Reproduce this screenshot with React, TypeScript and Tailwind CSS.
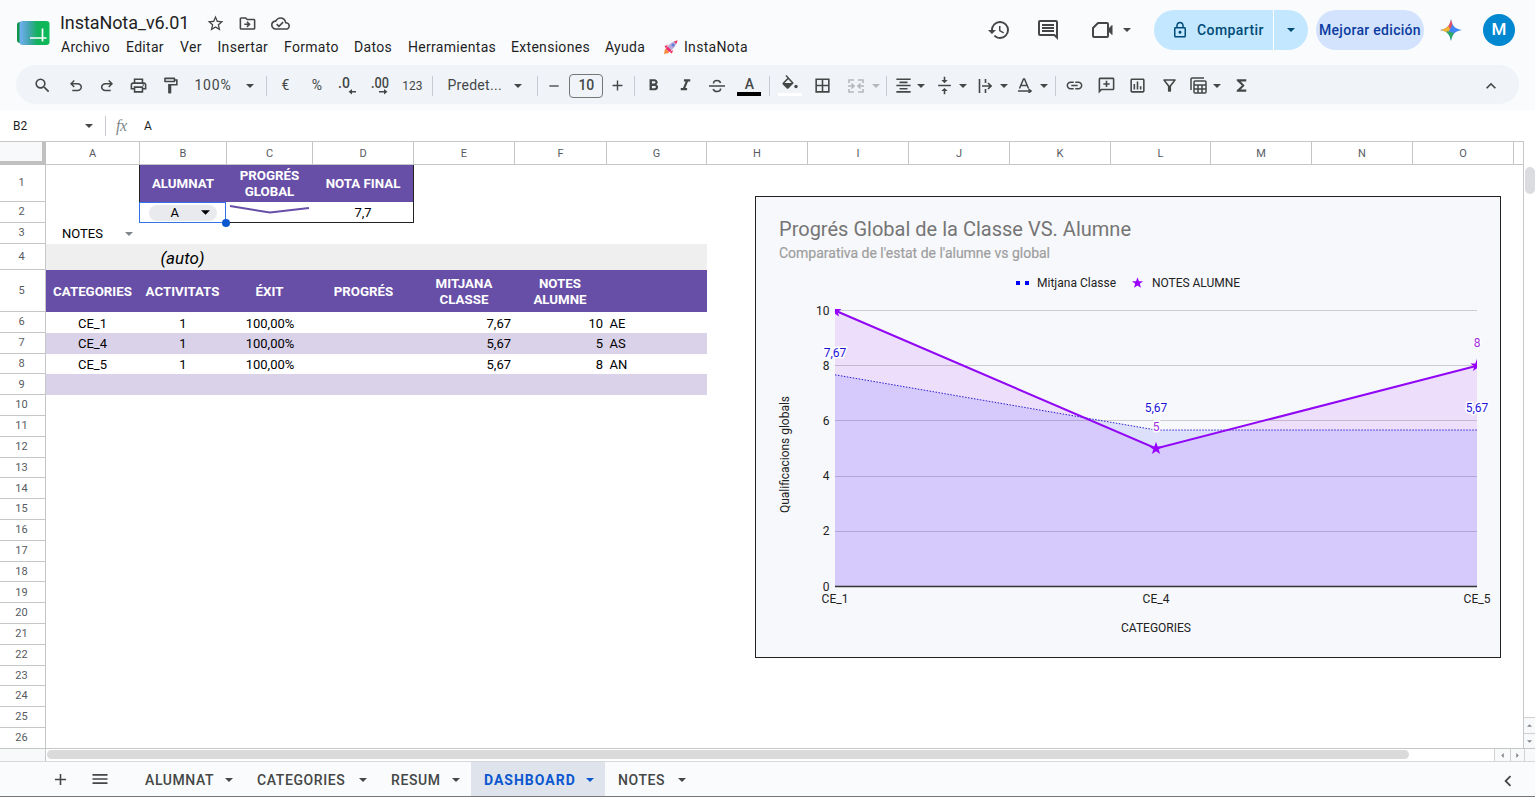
import React from 'react';
import clsx from 'clsx';
import {
  MdAdd,
  MdBorderAll,
  MdChevronLeft,
  MdFormatAlignCenter,
  MdFormatBold,
  MdFormatItalic,
  MdFunctions,
  MdHistory,
  MdKeyboardArrowUp,
  MdLink,
  MdMenu,
  MdOutlineCloudDone,
  MdOutlineDriveFileMove,
  MdOutlineFilterAlt,
  MdOutlineFormatPaint,
  MdOutlineInsertChart,
  MdOutlineLock,
  MdOutlinePrint,
  MdOutlineStarBorder,
  MdRemove,
  MdSearch,
  MdVerticalAlignCenter,
} from 'react-icons/md';

interface ToolProps {
  className?: string;
  children: React.ReactNode;
}

const menus = [
  { label: 'Archivo', width: 'w-[65px]' },
  { label: 'Editar', width: 'w-[54px]' },
  { label: 'Ver', width: 'w-[37.5px]' },
  { label: 'Insertar', width: 'w-[66.5px]' },
  { label: 'Formato', width: 'w-[70px]' },
  { label: 'Datos', width: 'w-[54px]' },
  { label: 'Herramientas', width: 'w-[103px]' },
  { label: 'Extensiones', width: 'w-[94px]' },
  { label: 'Ayuda', width: 'w-[58px]' },
];

const columns = [
  { label: 'A', width: 'w-[94px]' },
  { label: 'B', width: 'w-[87px]' },
  { label: 'C', width: 'w-[86px]' },
  { label: 'D', width: 'w-[101px]' },
  { label: 'E', width: 'w-[101px]' },
  { label: 'F', width: 'w-[92px]' },
  { label: 'G', width: 'w-[100px]' },
  { label: 'H', width: 'w-[101px]' },
  { label: 'I', width: 'w-[101px]' },
  { label: 'J', width: 'w-[101px]' },
  { label: 'K', width: 'w-[101px]' },
  { label: 'L', width: 'w-[100px]' },
  { label: 'M', width: 'w-[101px]' },
  { label: 'N', width: 'w-[101px]' },
  { label: 'O', width: 'w-[101px]' },
];

const rowHeights: Record<number, string> = {
  1: 'h-[37px]',
  2: 'h-[21px]',
  3: 'h-[21px]',
  4: 'h-[26px]',
  5: 'h-[42px]',
};

const records = [
  { category: 'CE_1', count: '1', exit: '100,00%', average: '7,67', grade: '10', mark: 'AE' },
  { category: 'CE_4', count: '1', exit: '100,00%', average: '5,67', grade: '5', mark: 'AS' },
  { category: 'CE_5', count: '1', exit: '100,00%', average: '5,67', grade: '8', mark: 'AN' },
  { category: '', count: '', exit: '', average: '', grade: '', mark: '' },
];

const sheets = [
  { label: 'ALUMNAT', width: 'w-[112px]' },
  { label: 'CATEGORIES', width: 'w-[134px]' },
  { label: 'RESUM', width: 'w-[93px]' },
  { label: 'DASHBOARD', width: 'w-[134px]', active: true },
  { label: 'NOTES', width: 'w-[92px]' },
];

const STAR = '0,-6.8 1.7,-2.1 6.6,-2.1 2.7,0.9 4.1,5.6 0,2.8 -4.1,5.6 -2.7,0.9 -6.6,-2.1 -1.7,-2.1';

function Caret({ className }: { className?: string }) {
  return (
    <svg viewBox="0 0 8 4" className={clsx('h-1 w-2 shrink-0 fill-current', className)}>
      <path d="M0 0h8L4 4z" />
    </svg>
  );
}

function Tool({ className, children }: ToolProps) {
  return <div className={clsx('flex h-full shrink-0 items-center justify-center', className)}>{children}</div>;
}

function Divider() {
  return <div className="h-5 w-px shrink-0 bg-[#c7cad0]" />;
}

function Symbol({ d, className }: { d: string; className?: string }) {
  return (
    <svg viewBox="0 -960 960 960" className={clsx('fill-current', className)}>
      <path d={d} />
    </svg>
  );
}

function Logo() {
  return (
    <svg viewBox="0 0 34 26" className="h-[26px] w-[34px]">
      <defs>
        <linearGradient id="logo" x1="0" x2="1">
          <stop offset="0" stopColor="#72b1f5" />
          <stop offset=".3" stopColor="#47a5b4" />
          <stop offset=".6" stopColor="#12b25c" />
          <stop offset="1" stopColor="#0cbb57" />
        </linearGradient>
      </defs>
      <rect x="1" y="2" width="12" height="21" rx="3" fill="#109447" />
      <rect x="3.5" y="1" width="30" height="24" rx="3" fill="url(#logo)" />
      <path d="M14 18h16.500M26.500 8.500v13" stroke="#fff" strokeWidth="1.700" fill="none" />
    </svg>
  );
}

function Rocket() {
  return (
    <svg viewBox="0 0 16 16" className="h-4 w-4">
      <path d="M5 6 1.500 7 3 9.500zM10 11l-1 3.500L6.500 13z" fill="#f0325f" />
      <path d="M2 10 5 9l2 2-1.500 3L1 15z" fill="#ff8a3c" />
      <path d="M3.500 10.500C5 6 8.500 2.500 13.500 2c0 5-3.500 8.500-8 10.500z" fill="#b9a9d8" />
      <path d="M3 9.500 4.500 7.500l4 4L6.500 13z" fill="#f3246a" />
      <path d="M11 2.500 14.500 1.200 13.500 5z" fill="#f0325f" />
      <circle cx="10" cy="6" r="1.500" fill="#5b7fd6" />
    </svg>
  );
}

function TitleBar() {
  return (
    <header className="flex h-[65px] pl-4">
      <div className="mt-5 w-11 shrink-0">
        <Logo />
      </div>
      <div className="flex flex-col">
        <div className="mt-[11px] flex h-6 items-center">
          <h1 className="w-[145.500px] pb-px text-[18px] tracking-[-0.080px] text-[#1f1f1f]">InstaNota_v6.01</h1>
          <MdOutlineStarBorder className="h-[19px] w-[19px] text-[#444746]" />
          <MdOutlineDriveFileMove className="ml-[13px] h-[19px] w-[19px] text-[#444746]" />
          <MdOutlineCloudDone className="ml-[14px] h-[19px] w-[19px] text-[#444746]" />
        </div>
        <nav className="mt-0.5 ml-px flex h-5 items-center text-[14px] tracking-[0.3px] text-[#1f1f1f]">
          {menus.map((menu) => (
            <span key={menu.label} className={menu.width}>
              {menu.label}
            </span>
          ))}
          <span className="flex items-center gap-[5px]">
            <Rocket />
            InstaNota
          </span>
        </nav>
      </div>

      <div className="ml-auto flex h-[60px] items-center text-[#444746]">
        <MdHistory className="h-6 w-6" />
        <svg viewBox="0 0 24 24" className="ml-[25px] h-6 w-6 fill-current">
          <path d="M22 4c0-1.100-.9-2-2-2H4c-1.100 0-2 .9-2 2v12c0 1.100.9 2 2 2h14l4 4V4zM20 17.200 18.800 16H4V4h16zM6 12h12v2H6zM6 9h12v2H6zM6 6h12v2H6z" />
        </svg>
        <svg viewBox="0 0 24 24" className="ml-[31px] h-6 w-6 fill-none stroke-current stroke-2">
          <path d="M7 5h9c.6 0 1 .4 1 1v12c0 .6-.4 1-1 1H3c-.6 0-1-.4-1-1v-8z" strokeLinejoin="round" />
          <path d="m17.500 11 3.500-3.500v9L17.500 13z" fill="currentColor" strokeWidth="1" />
        </svg>
        <Caret className="ml-2" />
        <button className="ml-[23px] flex h-10 items-center rounded-full bg-[#c2e7ff] text-[14px] font-medium tracking-[0.4px] text-[#004a77]">
          <span className="flex h-full w-[120px] items-center border-r border-white pl-[17px]">
            <MdOutlineLock className="mr-2 h-[18px] w-[18px]" />
            Compartir
          </span>
          <span className="flex w-[34px] justify-center">
            <Caret />
          </span>
        </button>
        <button className="ml-2 h-10 w-[108px] rounded-full bg-[#d3e3fd] text-[14px] font-medium tracking-[0.3px] whitespace-nowrap text-[#0b3ba0]">
          Mejorar edición
        </button>
        <svg viewBox="0 0 22 22" className="ml-4 h-[22px] w-[22px]">
          <defs>
            <clipPath id="spark">
              <path d="M11 0c.8 6.500 4.500 10.200 11 11-6.500.8-10.200 4.500-11 11-.8-6.500-4.500-10.200-11-11 6.500-.8 10.200-4.500 11-11z" />
            </clipPath>
          </defs>
          <g clipPath="url(#spark)">
            <path d="M0 0h22v22H0z" fill="#4285f4" />
            <path d="M0 0h14l-3 9-5 3z" fill="#e8505b" />
            <path d="M0 5h7l3 5-2 4H0z" fill="#f2b632" />
            <path d="m7 12 7 2-1 8H6z" fill="#2fa866" />
          </g>
        </svg>
        <div className="mr-5 ml-[21px] flex h-8 w-8 items-center justify-center rounded-full bg-[#0288d1] text-[17px] font-medium text-white">
          M
        </div>
      </div>
    </header>
  );
}

function Toolbar() {
  return (
    <div className="mx-4 flex h-[39px] items-center rounded-full bg-[#f0f4f9] pt-0.5 text-[14px] text-[#444746]">
      <Tool className="w-11 pl-2">
        <MdSearch className="h-[19px] w-[19px]" />
      </Tool>
      <Tool className="w-[31.6px]">
        <Symbol
          className="h-[18px] w-[18px]"
          d="M280-200v-80h284q63 0 109.500-40T720-420q0-60-46.500-100T564-560H312l104 104-56 56-200-200 200-200 56 56-104 104h252q97 0 169.500 63T800-420q0 94-72.500 157T564-200H280Z"
        />
      </Tool>
      <Tool className="w-[31.6px]">
        <Symbol
          className="h-[18px] w-[18px]"
          d="M396-200q-97 0-169.500-63T154-420q0-94 72.500-157T396-640h252L544-744l56-56 200 200-200 200-56-56 104-104H396q-63 0-109.500 40T240-420q0 60 46.500 100T396-280h284v80H396Z"
        />
      </Tool>
      <Tool className="w-[31.6px]">
        <MdOutlinePrint className="h-[19px] w-[19px]" />
      </Tool>
      <Tool className="w-[31.6px]">
        <MdOutlineFormatPaint className="h-[19px] w-[19px]" />
      </Tool>
      <div className="flex w-20 items-center justify-between pr-3 pl-2 tracking-[0.800px]">
        100%
        <Caret />
      </div>
      <Divider />
      <Tool className="ml-0.5 w-8">€</Tool>
      <Tool className="w-[31px]">%</Tool>
      <Tool className="w-8">
        <svg viewBox="0 0 20 20" className="h-5 w-5 fill-current">
          <text x="0" y="12" fontSize="14" fontWeight="500">.0</text>
          <path d="M18 15v1.500h-4v2l-3.500-2.700L14 13v2z" />
        </svg>
      </Tool>
      <Tool className="w-8">
        <svg viewBox="0 0 20 20" className="h-5 w-5 fill-current">
          <text x="1" y="12" fontSize="14" fontWeight="500" textLength="18" lengthAdjust="spacingAndGlyphs">.00</text>
          <path d="M9 15v1.500h5v2l3.500-2.700L14 13v2z" />
        </svg>
      </Tool>
      <Tool className="w-8 text-[12px]">123</Tool>
      <div className="w-1" />
      <Divider />
      <div className="flex w-[104px] items-center justify-between pr-[15px] pl-3.5 tracking-[0.3px]">
        Predet...
        <Caret />
      </div>
      <Divider />
      <Tool className="w-[31px]">
        <MdRemove className="h-4 w-4" />
      </Tool>
      <div className="flex h-6 w-[34px] shrink-0 items-center justify-center rounded-sm border border-[#747775] font-medium">
        10
      </div>
      <Tool className="w-[29px]">
        <MdAdd className="h-[17px] w-[17px]" />
      </Tool>
      <div className="w-0.5" />
      <Divider />
      <Tool className="ml-0.5 w-8">
        <MdFormatBold className="h-[19px] w-[19px]" />
      </Tool>
      <Tool className="w-8">
        <MdFormatItalic className="h-[19px] w-[19px]" />
      </Tool>
      <Tool className="w-8">
        <svg viewBox="0 0 16 14" className="h-3.5 w-4 fill-none stroke-current stroke-[1.600]">
          <path d="M0 7h16M4.500 4.500C4.500 2.500 6 1.500 8 1.500s3.200 1 3.500 2.500M4.200 10c.4 1.600 1.800 2.500 3.800 2.500s3.600-1 3.600-3" />
        </svg>
      </Tool>
      <Tool className="w-8">
        <div className="flex w-6 flex-col items-center border-b-4 border-black text-[14px] leading-4 font-medium">A</div>
      </Tool>
      <div className="w-1" />
      <Divider />
      <Tool className="ml-1 w-8">
        <svg viewBox="0 0 24 23" className="h-[23px] w-6 fill-current">
          <path d="M8.500 1 7.400 2.100l2 2L4.800 8.700c-.5.500-.5 1.200 0 1.700l4 4c.5.500 1.200.5 1.700 0l5.300-5.300zM10.300 5.300l3.400 3.700H6.600z" />
          <circle cx="18" cy="12.500" r="1.700" />
          <path d="M0 19h24v3H0z" fill="#fff" />
        </svg>
      </Tool>
      <Tool className="w-8">
        <MdBorderAll className="h-[19px] w-[19px]" />
      </Tool>
      <div className="flex w-12 items-center gap-3 pl-2.5 text-[#b4b7bb]">
        <svg viewBox="0 0 16 14" className="h-3.5 w-4 shrink-0 fill-none stroke-current stroke-[1.600]">
          <path d="M1 4V1h5M15 4V1h-5M1 10v3h5M15 10v3h-5M0 7h5M3.500 4.500 6 7 3.500 9.500M16 7h-5M12.500 4.500 10 7l2.500 2.500" />
        </svg>
        <Caret className="-ml-1" />
      </div>
      <Divider />
      <div className="flex w-[41px] items-center gap-[3px] pl-[7px]">
        <MdFormatAlignCenter className="h-[19px] w-[19px]" />
        <Caret className="ml-px" />
      </div>
      <div className="flex w-[41px] items-center gap-1 pl-[7px]">
        <MdVerticalAlignCenter className="h-[19px] w-[19px]" />
        <Caret className="ml-px" />
      </div>
      <div className="flex w-[40px] items-center gap-1.5 pl-[9px]">
        <svg viewBox="0 0 14 14" className="h-3.5 w-3.5 fill-none stroke-current stroke-[1.600]">
          <path d="M1.500 0v14M7.500 0v4M7.500 10v4M4 7h9M10 4l3 3-3 3" />
        </svg>
        <Caret className="ml-0.5" />
      </div>
      <div className="flex w-[46px] items-center gap-1.5 pl-[9px]">
        <svg viewBox="0 0 14 15" className="h-[15px] w-3.5 fill-none stroke-current stroke-[1.500]">
          <path d="M1.500 10.500 5.500 1h1l4 9.500M3 7.500h6M0 13h12M10.500 11l2.500 2-2.500 2" />
        </svg>
        <Caret className="ml-0.5" />
      </div>
      <Divider />
      <Tool className="ml-0.5 w-8">
        <MdLink className="h-[19px] w-[19px]" />
      </Tool>
      <Tool className="w-8">
        <svg viewBox="0 0 24 24" className="h-[19px] w-[19px] fill-current">
          <path d="M22 4c0-1.100-.9-2-2-2H4c-1.100 0-2 .9-2 2v18l4-4h14c1.100 0 2-.9 2-2V4zM20 16H5.200L4 17.200V4h16zM11 14h2v-3h3V9h-3V6h-2v3H8v2h3z" />
        </svg>
      </Tool>
      <Tool className="w-[31px]">
        <MdOutlineInsertChart className="h-[19px] w-[19px]" />
      </Tool>
      <Tool className="w-8">
        <MdOutlineFilterAlt className="h-[19px] w-[19px]" />
      </Tool>
      <div className="flex w-10 items-center gap-1.5 pl-[5px]">
        <svg viewBox="0 0 17 17" className="h-[17px] w-[17px] shrink-0 fill-none stroke-current stroke-[1.500]">
          <path d="M1 13V2.200C1 1.500 1.500 1 2.200 1H14" />
          <rect x="4" y="4" width="12" height="12" rx="1" />
          <path d="M4 8h12M4 12h12M8 8v8M12 8v8" />
        </svg>
        <Caret />
      </div>
      <Tool className="w-8">
        <MdFunctions className="h-[19px] w-[19px]" />
      </Tool>
      <Tool className="mr-[18px] ml-auto">
        <MdKeyboardArrowUp className="h-5 w-5" />
      </Tool>
    </div>
  );
}

function FormulaBar() {
  return (
    <div className="mt-1.5 flex h-[31px] items-center bg-white pt-px pl-[13px] text-[12px] text-[#1f1f1f]">
      <div className="flex w-[92px] items-center justify-between pr-3">
        B2
        <Caret className="text-[#444746]" />
      </div>
      <Divider />
      <span className="ml-2.5 w-7 font-['Liberation_Serif'] text-[16px] tracking-[-0.5px] text-[#80868b] italic">fx</span>
      A
    </div>
  );
}

function ProgressChart() {
  const x = [80, 401, 722];
  const y = (value: number) => 390.5 - value * 27.6;
  const average = [7.67, 5.67, 5.67].map((value, i) => `${x[i]},${y(value)}`).join(' ');
  const student = [10, 5, 8].map((value, i) => `${x[i]},${y(value)}`).join(' ');

  return (
    <svg
      viewBox="1 1 744 460"
      className="absolute top-[31px] left-[709px] h-[462px] w-[746px] border border-[#222] bg-[#f7f8fb] text-[12px]"
    >
      <text x="24" y="40" fontSize="20" fill="#757575" textLength="352">Progrés Global de la Classe VS. Alumne</text>
      <text x="24" y="62" fontSize="14" fill="#9e9e9e" stroke="#9e9e9e" strokeWidth=".2" textLength="271">
        Comparativa de l'estat de l'alumne vs global
      </text>
      <path d="M261 85h4v4h-4zM270 85h4v4h-4z" fill="#0000ff" />
      <text x="282" y="91" fontSize="12" fill="#222" textLength="79">Mitjana Classe</text>
      <polygon points={STAR} transform="translate(382.500 87) scale(.85)" fill="#9900ff" />
      <text x="397" y="91" fontSize="12" fill="#222" textLength="88">NOTES ALUMNE</text>

      {[2, 4, 6, 8, 10].map((tick) => (
        <path key={tick} d={`M80 ${Math.floor(y(tick)) + 0.5}H722`} stroke="#cccccc" />
      ))}
      <polygon points={`80,390.500 ${average} 722,390.500`} fill="#0011ff" fillOpacity=".1" />
      <polygon points={`80,390.500 ${student} 722,390.500`} fill="#9900ff" fillOpacity=".1" />
      <path d="M80 390.500H722" stroke="#333" strokeWidth="1.500" />
      <polyline points={average} fill="none" stroke="#2a1fd0" strokeWidth="1" strokeDasharray="1.500 1.500" />
      <polyline points={student} fill="none" stroke="#9107f5" strokeWidth="2" />
      <clipPath id="plot">
        <path d="M80 113h642v278H80z" />
      </clipPath>
      <g clipPath="url(#plot)" fill="#9900ff">
        <polygon points={STAR} transform="translate(80 115)" />
        <polygon points={STAR} transform="translate(401 252.500)" />
        <polygon points={STAR} transform="translate(722 169.500)" />
      </g>

      {[0, 2, 4, 6, 8, 10].map((tick) => (
        <text key={tick} x="74.5" y={y(tick) + 4} fontSize="12" textAnchor="end" fill="#222">
          {tick}
        </text>
      ))}
      <g fontSize="12" textAnchor="middle" stroke="#fff" strokeWidth="3" paintOrder="stroke">
        <g fill="#1a12d8">
          <text x="80" y="161">7,67</text>
          <text x="401" y="216">5,67</text>
          <text x="722" y="216">5,67</text>
        </g>
        <g fill="#a02de0">
          <text x="401" y="235">5</text>
          <text x="722" y="151">8</text>
        </g>
      </g>
      <g fontSize="12" textAnchor="middle" fill="#222">
        <text x="80" y="406.500">CE_1</text>
        <text x="401" y="406.500">CE_4</text>
        <text x="722" y="406.500">CE_5</text>
        <text x="401" y="436">CATEGORIES</text>
        <text transform="translate(34 258.500) rotate(-90)" textLength="117">Qualificacions globals</text>
      </g>
    </svg>
  );
}

function Cells() {
  return (
    <div className="relative h-full flex-1 text-[13px] text-black">
      <div className="flex h-[37px] pl-[93px] text-center text-[13.300px] leading-4 font-bold text-white">
        <div className="flex w-[275px] items-center border-x border-[#222] bg-[#674ea7]">
          <span className="w-[86px]">ALUMNAT</span>
          <span className="w-[87px] px-2">PROGRÉS GLOBAL</span>
          <span className="w-[100px]">NOTA FINAL</span>
        </div>
      </div>
      <div className="flex h-[21px] pl-[93px]">
        <div className="relative flex w-[87px] items-center justify-center border-[1.500px] border-[#3271ea]">
          <div className="flex h-4 w-[68px] items-center justify-between rounded-full bg-[#e8eaed] pr-[7px] pl-[22px]">
            A
            <Caret className="h-[5px]! w-[9px]!" />
          </div>
          <div className="absolute -right-[5px] -bottom-[5px] z-10 h-2 w-2 rounded-full bg-[#0b57d0]" />
        </div>
        <div className="w-[87px] border-b border-[#222]">
          <svg viewBox="0 0 87 20" className="h-5 w-[87px]">
            <path d="M4 4 44 10.500 83 6" fill="none" stroke="#674ea7" strokeWidth="2" />
          </svg>
        </div>
        <div className="w-[101px] border-r border-b border-[#222] text-center leading-[22px]">7,7</div>
      </div>
      <div className="flex h-[21px] w-[94px] items-center justify-between pr-[7px] pl-4">
        NOTES
        <Caret className="text-[#80868b]" />
      </div>
      <div className="flex h-[26px] w-[661px] items-center bg-[#efefef] pt-1 pl-[93px]">
        <span className="w-[87px] text-center text-[17px] italic">(auto)</span>
      </div>
      <div className="flex h-[42px] w-[661px] items-center bg-[#674ea7] pt-0.5 text-center text-[13.300px] leading-4 font-bold text-white">
        <span className="w-[93px]">CATEGORIES</span>
        <span className="w-[87px]">ACTIVITATS</span>
        <span className="w-[87px]">ÉXIT</span>
        <span className="w-[101px]">PROGRÉS</span>
        <span className="w-[100px] px-4">MITJANA CLASSE</span>
        <span className="w-[92px] px-4">NOTES ALUMNE</span>
      </div>
      {records.map((record, i) => (
        <div
          key={i}
          className={clsx('flex h-[20.800px] w-[661px] items-center pt-0.5', i % 2 === 1 ? 'bg-[#d9d2e9]' : 'bg-white')}
        >
          <span className="w-[93px] text-center">{record.category}</span>
          <span className="w-[88px] text-center">{record.count}</span>
          <span className="w-[86px] text-center">{record.exit}</span>
          <span className="w-[101px]" />
          <span className="w-[97px] text-right">{record.average}</span>
          <span className="w-[92px] text-right">{record.grade}</span>
          <span className="pl-[6.500px]">{record.mark}</span>
        </div>
      ))}
      <ProgressChart />
    </div>
  );
}

function Grid() {
  return (
    <div className="flex h-[608px] shrink-0 overflow-hidden bg-white">
      <div className="flex min-w-0 flex-1 flex-col border-r border-[#c8c8c8]">
        <div className="flex h-6 shrink-0 border-t border-[#c4c7c5] text-[11px] text-[#575b5f]">
          <div className="w-[46px] shrink-0 border-r-4 border-b-4 border-[#c0c0c0] bg-[#f8f9fa]" />
          {columns.map((column) => (
            <div
              key={column.label}
              className={clsx(
                'flex shrink-0 items-center justify-center border-r border-b border-[#c4c7c5] pt-0.5',
                column.width,
              )}
            >
              {column.label}
            </div>
          ))}
          <div className="flex-1 border-b border-[#c4c7c5]" />
        </div>
        <div className="flex min-h-0 flex-1">
          <div className="w-[46px] shrink-0 border-r border-[#c4c7c5] text-[11px] text-[#575b5f]">
            {Array.from({ length: 26 }, (_, i) => i + 1).map((row) => (
              <div
                key={row}
                className={clsx(
                  'flex items-center justify-center border-b border-[#c4c7c5] pt-px pr-0.5',
                  rowHeights[row] ?? 'h-[20.800px]',
                )}
              >
                {row}
              </div>
            ))}
          </div>
          <Cells />
        </div>
      </div>
      <div className="flex w-[11px] flex-col justify-between">
        <div className="mt-[26px] ml-px h-[27px] rounded-full bg-[#dadce0]" />
        <div className="text-[#80868b]">
          <div className="flex h-4 items-center justify-center border-t border-[#d0d0d0] bg-[#f8f9fa]">
            <Caret className="h-[3px]! w-[5px]! rotate-180" />
          </div>
          <div className="flex h-4 items-center justify-center border-t border-[#d0d0d0] bg-[#f8f9fa]">
            <Caret className="h-[3px]! w-[5px]!" />
          </div>
        </div>
      </div>
    </div>
  );
}

function HorizontalScroll() {
  return (
    <div className="-mt-px flex h-[13px] shrink-0 border-t border-[#c4c7c5] bg-white">
      <div className="w-[46px] border-r border-[#c4c7c5] bg-[#f8f9fa]" />
      <div className="mt-px ml-px h-[9px] w-[1362px] rounded-full bg-[#dadada]" />
      <div className="ml-auto flex text-[#80868b]">
        <div className="flex w-4 items-center justify-center border-l border-[#d0d0d0] bg-[#f8f9fa]">
          <Caret className="h-[3px]! w-[5px]! rotate-90" />
        </div>
        <div className="flex w-[15px] items-center justify-center border-x border-[#d0d0d0] bg-[#f8f9fa]">
          <Caret className="h-[3px]! w-[5px]! -rotate-90" />
        </div>
        <div className="w-2.5 bg-[#f8f9fa]" />
      </div>
    </div>
  );
}

function SheetTabs() {
  return (
    <footer className="flex h-9 shrink-0 items-center border-t border-b border-t-[#d5d8dc] border-b-[#777] bg-[#f9fbfd] text-[14px] tracking-[0.600px] text-[#444746]">
      <MdAdd className="ml-[51px] h-[19px] w-[19px]" />
      <MdMenu className="ml-5 h-5 w-5" />
      <div className="ml-[22px] flex h-full">
        {sheets.map((sheet) => (
          <div
            key={sheet.label}
            className={clsx(
              'flex h-full items-center justify-between pt-0.5 pr-[11px] pl-[13px]',
              sheet.width,
              sheet.active ? 'bg-[#dfe4ec] font-bold tracking-[1px] text-[#0b57d0]' : 'font-medium',
            )}
          >
            {sheet.label}
            <Caret />
          </div>
        ))}
      </div>
      <MdChevronLeft className="mt-1 mr-4 ml-auto h-[22px] w-[22px]" />
    </footer>
  );
}

export default function App() {
  return (
    <div className="flex h-[797px] w-[1535px] flex-col overflow-hidden bg-[#f9fbfd] font-[Roboto,'Liberation_Sans',sans-serif]">
      <TitleBar />
      <Toolbar />
      <FormulaBar />
      <Grid />
      <HorizontalScroll />
      <SheetTabs />
    </div>
  );
}
